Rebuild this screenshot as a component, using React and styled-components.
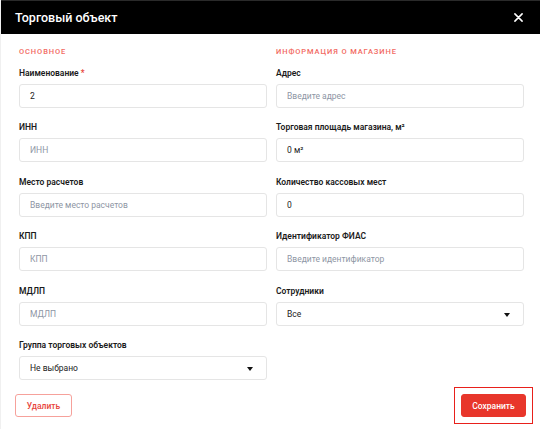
import React from 'react';
import styled, { createGlobalStyle } from 'styled-components';

const Global = createGlobalStyle`
  html, body {
    margin: 0;
    padding: 0;
    background: #fff;
  }
  * {
    box-sizing: border-box;
  }
  body {
    font-family: Roboto, "Noto Sans", Arial, sans-serif;
  }
`;

const Modal = styled.div`
  width: 540px;
  min-height: 429px;
  display: flex;
  flex-direction: column;
  background: #fff;
  border-left: 1px solid #f0f0f0;
`;

const Header = styled.header`
  flex-shrink: 0;
  height: 34px;
  display: flex;
  align-items: center;
  justify-content: space-between;
  padding: 0 16px 0 14px;
  background: #000;
  border-top: 1px solid #2a2a2a;
`;

const Title = styled.h1`
  margin: 0;
  font-size: 12.5px;
  font-weight: 500;
  color: #fff;
`;

const Close = styled.button`
  width: 12px;
  height: 12px;
  padding: 0;
  border: 0;
  background: none;
  display: flex;
  align-items: center;
  justify-content: center;
  cursor: pointer;
`;

const Body = styled.div`
  flex-shrink: 0;
  display: grid;
  grid-template-columns: 248px 248px;
  column-gap: 9px;
  padding: 13px 17px 0 18px;
`;

const Column = styled.section`
  display: flex;
  flex-direction: column;
`;

const SectionTitle = styled.h2`
  margin: 0 0 10.5px;
  font-size: 7.5px;
  line-height: 10px;
  font-weight: 500;
  letter-spacing: 0.9px;
  text-transform: uppercase;
  color: #f26a62;
`;

const Field = styled.div`
  display: flex;
  flex-direction: column;
  margin-bottom: 14.5px;
`;

const Label = styled.label`
  font-size: 8.5px;
  line-height: 11px;
  font-weight: 600;
  color: #1b1b1b;
  margin-bottom: 5px;
`;

const Required = styled.span`
  color: #e8453c;
`;

const Box = styled.div`
  position: relative;
  height: 24px;
  display: flex;
  align-items: center;
  padding: 0 10px;
  border: 1px solid #e5e5e5;
  border-radius: 3px;
  font-size: 8.5px;
  color: ${({ $placeholder }) => ($placeholder ? '#8e96a4' : '#222')};
`;

const Arrow = styled.span`
  position: absolute;
  right: 13px;
  top: 10px;
  width: 0;
  height: 0;
  border-left: 3.5px solid transparent;
  border-right: 3.5px solid transparent;
  border-top: 4px solid #111;
`;

const Footer = styled.footer`
  flex-shrink: 0;
  display: flex;
  justify-content: space-between;
  align-items: center;
  margin-top: -7.5px;
  padding: 0 7px 0 14px;
`;

const FocusRing = styled.div`
  display: flex;
  padding: 6px;
  border: 1.5px solid #e8201b;
`;

const Button = styled.button`
  height: 23px;
  padding: 0 10px;
  border-radius: 3px;
  font-family: inherit;
  font-size: 8.5px;
  font-weight: 500;
  cursor: pointer;
  ${({ $primary }) =>
    $primary
      ? `
    background: #e8362b;
    border: 1px solid #e8362b;
    color: #fff;
    width: 65px;
  `
      : `
    background: #fff;
    border: 1px solid #f6a19b;
    color: #e8453c;
    width: 57px;
  `}
`;

function Input({ label, required, value, placeholder, select }) {
  return (
    <Field>
      <Label>
        {label}
        {required && <Required> *</Required>}
      </Label>
      <Box $placeholder={!value}>
        {value || placeholder}
        {select && <Arrow />}
      </Box>
    </Field>
  );
}

export default function App() {
  return (
    <>
      <Global />
      <Modal>
        <Header>
          <Title>Торговый объект</Title>
          <Close aria-label="Закрыть">
            <svg width="9" height="9" viewBox="0 0 10 10">
              <path d="M1 1 L9 9 M9 1 L1 9" stroke="#fff" strokeWidth="1.7" strokeLinecap="round" />
            </svg>
          </Close>
        </Header>
        <Body>
          <Column>
            <SectionTitle>Основное</SectionTitle>
            <Input label="Наименование" required value="2" />
            <Input label="ИНН" placeholder="ИНН" />
            <Input label="Место расчетов" placeholder="Введите место расчетов" />
            <Input label="КПП" placeholder="КПП" />
            <Input label="МДЛП" placeholder="МДЛП" />
            <Input label="Группа торговых объектов" value="Не выбрано" select />
          </Column>
          <Column>
            <SectionTitle>Информация о магазине</SectionTitle>
            <Input label="Адрес" placeholder="Введите адрес" />
            <Input label="Торговая площадь магазина, м²" value="0 м²" />
            <Input label="Количество кассовых мест" value="0" />
            <Input label="Идентификатор ФИАС" placeholder="Введите идентификатор" />
            <Input label="Сотрудники" value="Все" select />
          </Column>
        </Body>
        <Footer>
          <Button>Удалить</Button>
          <FocusRing>
            <Button $primary>Сохранить</Button>
          </FocusRing>
        </Footer>
      </Modal>
    </>
  );
}
